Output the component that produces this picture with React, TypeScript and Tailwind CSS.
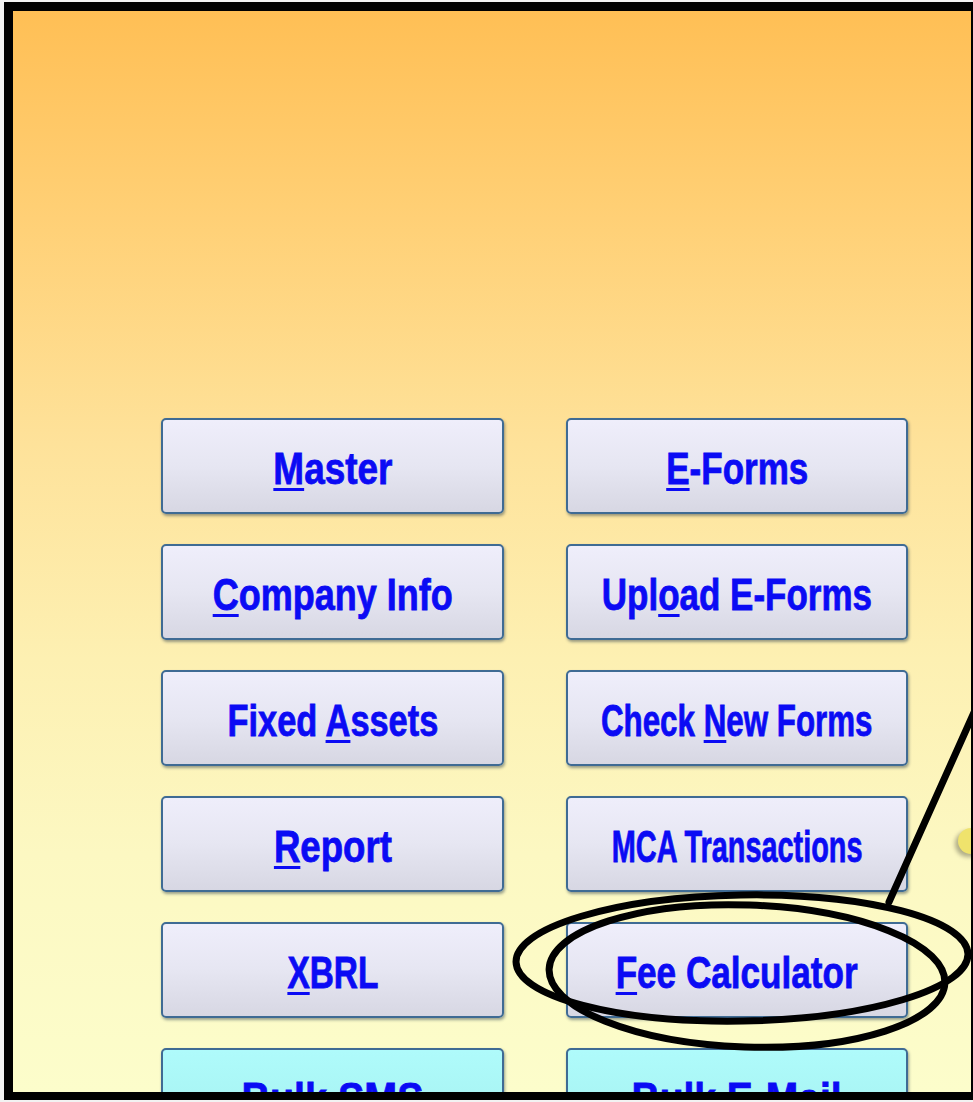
import React from 'react';

type MenuItem = {
  pre: string;
  key?: string;
  post: string;
  scale: string;
  tone?: 'plain' | 'cyan';
};

const leftColumn: MenuItem[] = [
  { pre: '', key: 'M', post: 'aster', scale: 'scale-x-[0.84]' },
  { pre: '', key: 'C', post: 'ompany Info', scale: 'scale-x-[0.818]' },
  { pre: 'Fixed ', key: 'A', post: 'ssets', scale: 'scale-x-[0.781]' },
  { pre: '', key: 'R', post: 'eport', scale: 'scale-x-[0.832]' },
  { pre: '', key: 'X', post: 'BRL', scale: 'scale-x-[0.76]' },
  { pre: 'Bulk SMS', post: '', scale: 'scale-x-[0.897]', tone: 'cyan' },
];

const rightColumn: MenuItem[] = [
  { pre: '', key: 'E', post: '-Forms', scale: 'scale-x-[0.796]' },
  { pre: 'Upl', key: 'o', post: 'ad E-Forms', scale: 'scale-x-[0.795]' },
  { pre: 'Check ', key: 'N', post: 'ew Forms', scale: 'scale-x-[0.712]' },
  { pre: 'MCA Transactions', post: '', scale: 'scale-x-[0.656]' },
  { pre: '', key: 'F', post: 'ee Calculator', scale: 'scale-x-[0.798]' },
  { pre: 'Bulk E-Mail', post: '', scale: 'scale-x-[0.886]', tone: 'cyan' },
];

const MenuButton: React.FC<{ item: MenuItem }> = ({ item }) => {
  const face =
    item.tone === 'cyan'
      ? 'bg-[linear-gradient(180deg,#affbfb_0%,#a4f0ef_100%)]'
      : 'bg-[linear-gradient(180deg,#efeefb_0%,#e6e6f2_50%,#d7d7e3_100%)]';
  return (
    <button
      className={`h-[96px] w-full rounded-[5px] border-2 border-[#3f6b94] ${face} shadow-[1px_2px_3px_rgba(30,50,70,0.45)] flex items-center justify-center`}
    >
      <span
        className={`inline-block whitespace-nowrap translate-y-[3px] ${item.scale} font-['Liberation_Sans',Arial,sans-serif] font-bold text-[44px] leading-none text-[#0b0bf4] [-webkit-text-stroke:0.8px_#0b0bf4]`}
      >
        {item.pre}
        {item.key && (
          <span className="underline decoration-[3px] underline-offset-[4px]">{item.key}</span>
        )}
        {item.post}
      </span>
    </button>
  );
};

export default function App() {
  return (
    <div className="relative w-[973px] h-[1102px] bg-[#f2f2f2] pt-[2px] pl-[4px] overflow-hidden">
      <div className="w-[969px] h-[1098px] border-black border-t-[9px] border-l-[9px] border-r-[2px] border-b-[8px] overflow-hidden">
        <div className="relative w-full h-full bg-[linear-gradient(180deg,#ffbf55_0%,#ffcf74_18%,#fee29a_40%,#fdf0b2_60%,#fcf8c2_78%,#fcfdcb_100%)] pt-[407px] pl-[148px]">
          <div className="grid grid-cols-[343px_342px] gap-x-[62px]">
            <div className="flex flex-col gap-[30px]">
              {leftColumn.map((item, i) => (
                <MenuButton key={i} item={item} />
              ))}
            </div>
            <div className="flex flex-col gap-[30px]">
              {rightColumn.map((item, i) => (
                <MenuButton key={i} item={item} />
              ))}
            </div>
          </div>

          {/* partly hidden yellow marker at the right edge */}
          <div className="absolute left-[945px] top-[817px] w-[30px] h-[26px] rounded-full bg-[#efe36c] shadow-[-3px_3px_4px_rgba(0,0,0,0.3)]" />
        </div>
      </div>

      {/* callout drawn over the menu */}
      <svg
        className="absolute inset-0 pointer-events-none"
        width="973"
        height="1102"
        viewBox="0 0 973 1102"
      >
        <g fill="none" stroke="#000" strokeWidth="7" strokeLinecap="round">
          <ellipse cx="742" cy="958" rx="226" ry="63" transform="rotate(-1 742 958)" />
          <ellipse cx="747" cy="976" rx="198" ry="71" transform="rotate(2 747 976)" />
          <line x1="889" y1="902" x2="976" y2="708" />
        </g>
      </svg>
    </div>
  );
}
